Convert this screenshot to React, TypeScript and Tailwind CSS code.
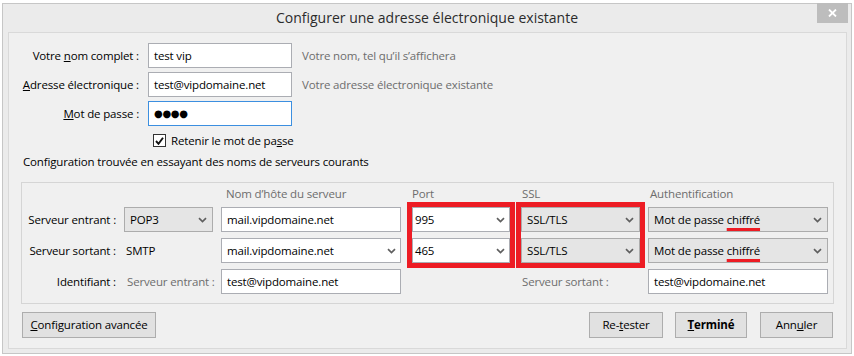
import type { ReactNode } from "react"

function Chevron() {
  return (
    <svg width="9" height="6" viewBox="0 0 9 6" className="shrink-0">
      <path d="M1 1.2l3.5 3.3L8 1.2" fill="none" stroke="#5f5f5f" strokeWidth="1.7" />
    </svg>
  )
}

function Field({ children, w, focus }: { children: ReactNode; w: string; focus?: boolean }) {
  return (
    <div
      className={`${w} h-[25px] bg-white border ${focus ? "border-[#3c8fe0]" : "border-[#abadb3]"} flex items-center pl-[5px]`}
    >
      {children}
    </div>
  )
}

function Combo({ value, w, pl = "pl-[5px]" }: { value: string; w: string; pl?: string }) {
  return (
    <div className={`${w} h-[25px] bg-white border border-[#abadb3] flex items-center justify-between ${pl} pr-[4px]`}>
      <span>{value}</span>
      <Chevron />
    </div>
  )
}

function Select({ value, w }: { value: ReactNode; w: string }) {
  return (
    <div className={`${w} h-[25px] bg-[#e5e5e5] border border-[#acacac] flex items-center justify-between pl-[5px] pr-[5px]`}>
      <span>{value}</span>
      <Chevron />
    </div>
  )
}

function Btn({ children, w, bold }: { children: ReactNode; w: string; bold?: boolean }) {
  return (
    <div
      className={`${w} h-[26px] bg-[#e1e1e1] border border-[#adadad] flex items-center justify-center ${bold ? "font-bold" : ""}`}
    >
      {children}
    </div>
  )
}

const Chiffre = () => (
  <>
    Mot de passe{" "}
    <span className="underline decoration-[#ed1c24] decoration-[3px] underline-offset-[4px]">chiffré</span>
  </>
)

export default function App() {
  return (
    <div className="w-[854px] h-[356px] overflow-hidden bg-white pl-[2px] pt-[3px] font-['Open_Sans',sans-serif] text-[11.5px] tracking-[-0.15px] leading-none text-black whitespace-nowrap">
      <div className="w-[850px] h-[351px] border border-[#c6c6c6] bg-[#ebebeb] flex flex-col">
        {/* title bar */}
        <div className="h-[28px] shrink-0 flex items-start">
          <div className="w-[34px]" />
          <div className="flex-1 h-full flex items-center justify-center text-[14px] tracking-normal text-[#2b2b2b]">
            Configurer une adresse électronique existante
          </div>
          <div className="w-[31px] h-[20px] -mt-px mr-[3px] bg-[#bdbdbd] flex items-center justify-center">
            <svg width="9" height="8" viewBox="0 0 9 8">
              <path d="M1 0.5l7 7M8 0.5l-7 7" stroke="#fff" strokeWidth="1.8" />
            </svg>
          </div>
        </div>

        {/* client area */}
        <div className="ml-[5px] mr-[4px] h-[317px] border border-[#d9d9d9] bg-[#f0f0f0] flex flex-col">
          <div className="pt-[10px] grid grid-cols-[130px_144px_1fr] grid-rows-[25px_25px_25px] gap-x-[9px] gap-y-[4px] items-center">
            <div className="text-right">
              Votre <span className="underline">n</span>om complet :
            </div>
            <Field w="w-[144px]">test vip</Field>
            <div className="ml-[1px] text-[#6d6d6d]">Votre nom, tel qu’il s’affichera</div>

            <div className="text-right">
              <span className="underline">A</span>dresse électronique :
            </div>
            <Field w="w-[144px]">test@vipdomaine.net</Field>
            <div className="ml-[1px] text-[#6d6d6d]">Votre adresse électronique existante</div>

            <div className="text-right">
              <span className="underline">M</span>ot de passe :
            </div>
            <Field w="w-[144px]" focus>
              <span className="text-[10px] tracking-[-0.3px] font-['DejaVu_Sans',sans-serif]">●●●●</span>
            </Field>
            <div />
          </div>

          <div className="mt-[6px] ml-[144px] h-[17px] flex items-center gap-[5px]">
            <div className="w-[13px] h-[13px] bg-white border border-[#333] flex items-center justify-center">
              <svg width="9" height="8" viewBox="0 0 9 8">
                <path d="M1 4l2.5 2.8L8 0.8" fill="none" stroke="#111" strokeWidth="1.9" />
              </svg>
            </div>
            <span>
              Retenir le mot de pa<span className="underline">s</span>se
            </span>
          </div>

          <div className="mt-[5px] ml-[14px] h-[16px] flex items-center">
            Configuration trouvée en essayant des noms de serveurs courants
          </div>

          {/* server group */}
          <div className="mt-[12px] ml-[12px] w-[813px] border border-[#d5d5d5] pt-[3px] pb-[9px] pl-[6px] pr-[4px]">
            <div className="grid grid-cols-[96px_97px_186px_109px_132px_180px] grid-rows-[15px_25px_25px_25px] gap-y-[6px] items-center">
              <div className="col-start-3 row-start-1 pl-[5px] text-[#6d6d6d]">Nom d’hôte du serveur</div>
              <div className="col-start-4 row-start-1 pl-[5px] text-[#6d6d6d]">Port</div>
              <div className="col-start-5 row-start-1 pl-[6px] text-[#6d6d6d]">SSL</div>
              <div className="col-start-6 row-start-1 pl-[2px] text-[#6d6d6d]">Authentification</div>

              <div className="col-start-1 row-start-2 text-right pr-[8px]">Serveur entrant :</div>
              <div className="col-start-2 row-start-2">
                <Select value="POP3" w="w-[89px]" />
              </div>
              <div className="col-start-3 row-start-2">
                <Field w="w-[180px]">mail.vipdomaine.net</Field>
              </div>
              <div className="col-start-4 row-start-2 pl-[5px]">
                <Combo value="995" w="w-[98px]" pl="pl-[2px]" />
              </div>
              <div className="col-start-5 row-start-2 pl-[5px]">
                <Select value="SSL/TLS" w="w-[119px]" />
              </div>
              <div className="col-start-6 row-start-2">
                <Select value={<Chiffre />} w="w-[180px]" />
              </div>

              <div className="col-start-1 row-start-3 text-right pr-[8px]">Serveur sortant :</div>
              <div className="col-start-2 row-start-3 pl-[2px]">SMTP</div>
              <div className="col-start-3 row-start-3">
                <Combo value="mail.vipdomaine.net" w="w-[180px]" />
              </div>
              <div className="col-start-4 row-start-3 pl-[5px]">
                <Combo value="465" w="w-[98px]" pl="pl-[2px]" />
              </div>
              <div className="col-start-5 row-start-3 pl-[5px]">
                <Select value="SSL/TLS" w="w-[119px]" />
              </div>
              <div className="col-start-6 row-start-3">
                <Select value={<Chiffre />} w="w-[180px]" />
              </div>

              <div className="col-start-1 row-start-4 text-right pr-[8px]">Identifiant :</div>
              <div className="col-start-2 row-start-4 pl-[3px] text-[#6d6d6d]">Serveur entrant :</div>
              <div className="col-start-3 row-start-4">
                <Field w="w-[180px]">test@vipdomaine.net</Field>
              </div>
              <div className="col-start-5 row-start-4 pl-[6px] text-[#6d6d6d]">Serveur sortant :</div>
              <div className="col-start-6 row-start-4">
                <Field w="w-[180px]">test@vipdomaine.net</Field>
              </div>

              {/* red highlight boxes */}
              <div className="col-start-4 row-start-2 row-span-2 self-stretch -my-[5px] w-[108px] border-[5px] border-[#ed1c24]" />
              <div className="col-start-5 row-start-2 row-span-2 self-stretch -my-[5px] w-[129px] border-[5px] border-[#ed1c24]" />
            </div>
          </div>

          {/* buttons */}
          <div className="mt-[8px] mx-[13px] flex items-center">
            <Btn w="w-[134px]">
              <span className="underline">C</span>onfiguration avancée
            </Btn>
            <div className="flex-1" />
            <Btn w="w-[74px]">
              Re-<span className="underline">t</span>ester
            </Btn>
            <div className="w-[12px]" />
            <Btn w="w-[72px]" bold>
              <span className="underline">T</span>erminé
            </Btn>
            <div className="w-[13px]" />
            <Btn w="w-[73px]">
              Ann<span className="underline">u</span>ler
            </Btn>
          </div>
        </div>
      </div>
    </div>
  )
}
